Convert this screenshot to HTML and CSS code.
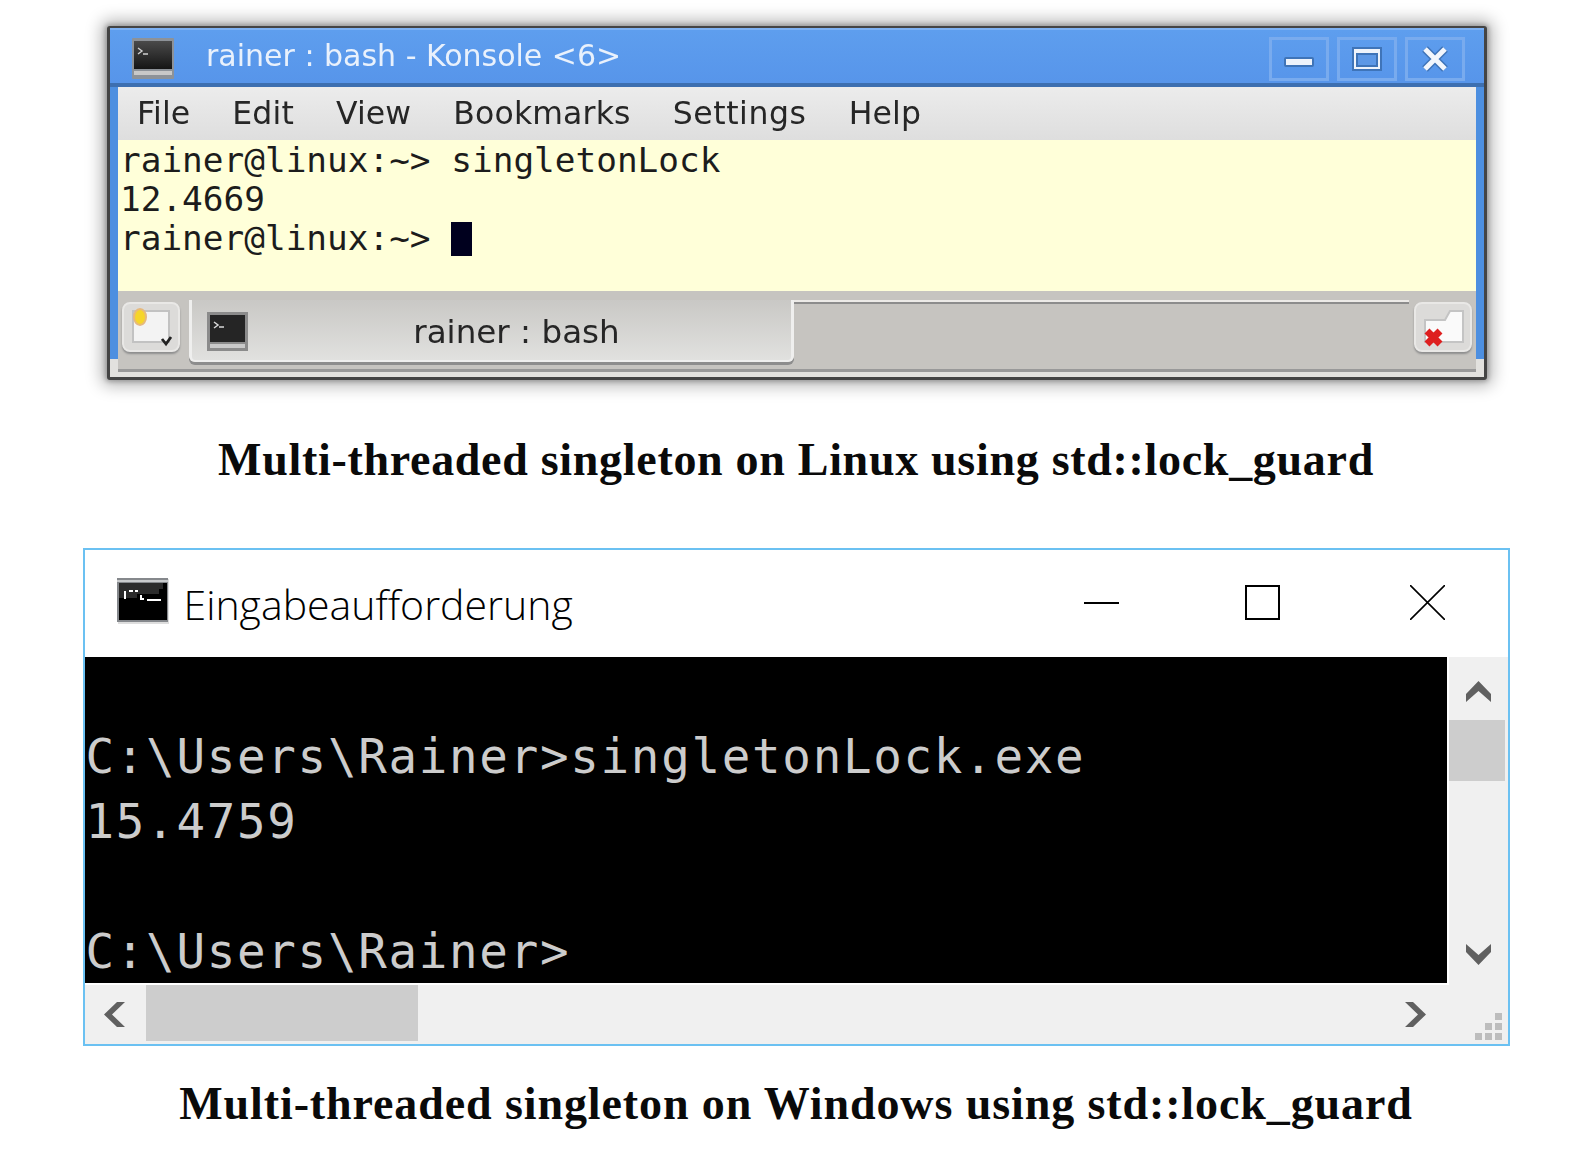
FILE: index.html
```html
<!DOCTYPE html>
<html lang="en">
<head>
<meta charset="utf-8">
<title>Multi-threaded singleton</title>
<link rel="stylesheet" href="styles.css">
</head>
<body>
<main class="page">
  <section class="konsole">
    <header class="k-title">
      <svg class="k-app-icon" viewBox="0 0 42 41"><defs><linearGradient id="ka" x1="0" y1="0" x2="0" y2="1"><stop offset="0" stop-color="#4a4a4a"/><stop offset="1" stop-color="#151515"/></linearGradient></defs><rect width="42" height="41" rx="1" fill="#8d9298"/><rect x="2" y="3" width="38" height="28" fill="url(#ka)"/><rect x="2" y="33" width="38" height="4" fill="#c8c8c8"/><path d="M6 10l4 3-4 3M11 16h5" fill="none" stroke="#d0d0d0" stroke-width="1.4"/></svg>
      <span class="k-title-text">rainer : bash - Konsole &lt;6&gt;</span>
      <div class="k-buttons">
        <button class="k-btn k-btn-min" aria-label="Minimize"><svg width="34" height="12" viewBox="0 0 34 12"><rect x="3" y="2" width="28" height="8" rx="1" fill="#eef3fb" stroke="#3f74b8" stroke-width="2"/></svg></button>
        <button class="k-btn" aria-label="Maximize"><svg width="34" height="28" viewBox="0 0 34 28"><rect x="2" y="2" width="30" height="24" fill="#3f74b8"/><rect x="4" y="4" width="26" height="20" fill="#eef3fb"/><rect x="7" y="9" width="20" height="12" fill="#5d98e6" stroke="#3f74b8" stroke-width="2"/></svg></button>
        <button class="k-btn" aria-label="Close"><svg width="30" height="28" viewBox="0 0 30 28"><path d="M5 4l20 20M25 4L5 24" stroke="#3f74b8" stroke-width="8"/><path d="M5 4l20 20M25 4L5 24" stroke="#f2f6fc" stroke-width="5"/></svg></button>
      </div>
    </header>
    <div class="k-body">
      <nav class="k-menu">
        <span>File</span><span>Edit</span><span>View</span><span>Bookmarks</span><span class="k-menu-wide">Settings</span><span>Help</span>
      </nav>
      <pre class="k-term">rainer@linux:~&gt; singletonLock
12.4669
rainer@linux:~&gt; <span class="k-cursor"></span></pre>
      <div class="k-tabs">
        <button class="k-tool" aria-label="New tab"><svg width="44" height="42" viewBox="0 0 44 42"><rect x="4" y="5" width="36" height="31" fill="#f3f3f3" stroke="#c2c2c2" stroke-width="2"/><ellipse cx="11" cy="11" rx="6" ry="8" fill="#f6d52a" stroke="#e6b97c" stroke-width="2"/><path d="M33 33l4 5 5-7" fill="none" stroke="#222" stroke-width="2.8"/></svg></button>
        <div class="k-tab">
          <svg class="k-tab-icon" viewBox="0 0 41 39"><rect width="41" height="39" fill="#8b8b8b"/><rect x="3" y="3" width="35" height="27" fill="#252525"/><rect x="3" y="32" width="35" height="4" fill="#c9c9c9"/><path d="M7 10l4 3-4 3M12 15h5" fill="none" stroke="#d8d8d8" stroke-width="1.5"/></svg>
          <span class="k-tab-text">rainer : bash</span>
        </div>
        <div class="k-tab-rest"></div>
        <button class="k-tool k-tool-close" aria-label="Close tab"><svg width="50" height="42" viewBox="0 0 50 42"><path d="M7 14h20l5-9h13v31H7z" fill="#fafafa" stroke="#c4c4c4" stroke-width="2"/><path d="M9 25l13 13M22 25L9 38" stroke="#de1f1f" stroke-width="7"/></svg></button>
      </div>
    </div>
  </section>

  <h2 class="caption caption-linux">Multi-threaded singleton on Linux using std::lock_guard</h2>

  <section class="cmd">
    <header class="cmd-title">
      <svg class="cmd-icon" viewBox="0 0 52 46"><rect x="1" y="1" width="51" height="45" fill="#dedede"/><rect width="51" height="44" fill="#85888c"/><rect y="2" width="51" height="2" fill="#c8cacc"/><rect x="2" y="5" width="48" height="37" fill="#000"/><path d="M2 5h44v6h-4v5H20v4H2z" fill="#2b2b2b"/><path d="M8 13v8M12 13h4M18 13h3M24 17v4h3M30 22h14" stroke="#fff" stroke-width="2" fill="none"/></svg>
      <span class="cmd-title-text">Eingabeaufforderung</span>
      <svg class="cmd-min" width="35" height="2" viewBox="0 0 35 2"><rect width="35" height="2" fill="#000"/></svg>
      <svg class="cmd-max" width="35" height="35" viewBox="0 0 35 35"><rect x="1" y="1" width="33" height="33" fill="none" stroke="#000" stroke-width="2"/></svg>
      <svg class="cmd-close" width="35" height="35" viewBox="0 0 35 35"><path d="M0 0l35 35M35 0L0 35" stroke="#000" stroke-width="1.6"/></svg>
    </header>
    <div class="cmd-main">
      <pre class="cmd-term">

C:\Users\Rainer&gt;singletonLock.exe
15.4759

C:\Users\Rainer&gt;</pre>
      <div class="cmd-vscroll">
        <svg class="chev" width="25" height="21" viewBox="0 0 25 21"><path d="M0 13L12.500 0 25 13v8L12.500 10 0 21z" fill="#606060"/></svg>
        <div class="cmd-vthumb"></div>
        <svg class="chev chev-down" width="25" height="21" viewBox="0 0 25 21"><path d="M0 0l12.500 11L25 0v8L12.500 21 0 8z" fill="#606060"/></svg>
      </div>
    </div>
    <div class="cmd-hscroll">
      <svg class="chev-left" width="21" height="25" viewBox="0 0 21 25"><path d="M21 0L8 12.500 21 25h-8L0 12.500 13 0z" fill="#606060"/></svg>
      <div class="cmd-hthumb"></div>
      <svg class="chev-right" width="21" height="25" viewBox="0 0 21 25"><path d="M0 0l13 12.500L0 25h8L21 12.500 8 0z" fill="#606060"/></svg>
      <div class="cmd-grip"><i></i><i></i><i></i><i></i><i></i><i></i></div>
    </div>
  </section>

  <h2 class="caption caption-win">Multi-threaded singleton on Windows using std::lock_guard</h2>
</main>
</body>
</html>
```
FILE: styles.css
```css
* { box-sizing: border-box; }
html, body { margin: 0; padding: 0; background: #fff; }
body { width: 1595px; height: 1157px; overflow: hidden; }
.page { width: 1592px; display: flex; flex-direction: column; align-items: center; padding-top: 26px; }
button { padding: 0; border: 0; background: none; font: inherit; }
svg { display: block; flex: none; }
pre { margin: 0; }

/* Konsole window */
.konsole {
  width: 1380px; height: 354px; margin-left: 2px;
  border: 3px solid #444; border-top-width: 2px; border-radius: 3px;
  background: #5a9bec;
  box-shadow: 0 0 4px 2px rgba(0,0,0,.22), 0 0 16px 6px rgba(0,0,0,.28);
  display: flex; flex-direction: column;
}
.k-title {
  height: 59px; flex: none;
  display: flex; align-items: flex-start;
  padding: 8px 19px 0 22px;
  border-top: 2px solid #7db1f3;
  border-bottom: 4px solid #3d6fb0;
  background: linear-gradient(#5e9eee, #5795ea);
}
.k-app-icon { width: 42px; height: 41px; }
.k-title-text {
  margin-left: 32px;
  font: 30px/36px "DejaVu Sans", sans-serif;
  color: #e9f1fc;
  white-space: nowrap;
  filter: blur(.4px);
}
.k-buttons { margin-left: auto; display: flex; gap: 8px; margin-top: -1px; }
.k-btn {
  width: 60px; height: 44px;
  border: 3px solid #79abee;
  display: flex; align-items: center; justify-content: center;
}
.k-btn-min { padding-top: 5px; }
.k-body {
  flex: 1; min-height: 0;
  padding: 0 8px 5px;
  display: flex; flex-direction: column;
  background: linear-gradient(#4d8fe0 calc(100% - 18px), #e2e1de 0);
}
.k-menu {
  height: 53px; flex: none;
  display: flex; gap: 42px;
  padding: 6px 0 0 19px;
  background: linear-gradient(#ececec, #dedede);
  font: 31.500px/40px "DejaVu Sans", sans-serif;
  letter-spacing: .15px;
  color: #262626;
}
.k-menu span { filter: blur(.4px); }
.k-menu .k-menu-wide { letter-spacing: .6px; }
.k-term {
  height: 151px; flex: none;
  padding: 1px 0 0 2px;
  background: #ffffd9;
  font: 34.400px/39px "DejaVu Sans Mono", monospace;
  color: #1c1c1c;
}
.k-cursor { display: inline-block; width: 21px; height: 34px; background: #00001e; vertical-align: -6px; }
.k-tabs {
  flex: 1; min-height: 0;
  display: flex; align-items: flex-start;
  padding-left: 4px;
  background: #c6c4c0;
  border-bottom: 3px solid #999;
}
.k-tool {
  width: 58px; height: 50px; margin-top: 11px; flex: none;
  border: 2px solid #e9e8e6; border-radius: 8px;
  background: #dcdbd9;
  box-shadow: 0 2px 2px #8e8e8e;
  display: flex; align-items: center; justify-content: center;
}
.k-tab {
  width: 605px; height: 62px; margin: 9px 0 0 9px; flex: none;
  display: flex; align-items: flex-start;
  padding: 12px 6px 0 15px;
  background: linear-gradient(#c9c8c5, #e1e1df);
  border: solid #efefee; border-width: 0 3px 2px 3px;
  border-radius: 0 0 6px 6px;
  box-shadow: 0 3px 0 #8d8d8d;
}
.k-tab-icon { width: 41px; height: 39px; }
.k-tab-text {
  flex: 1; text-align: center;
  font: 32.600px/40px "DejaVu Sans", sans-serif;
  color: #262626;
  filter: blur(.4px);
}
.k-tab-rest {
  flex: 1; height: 4px; margin: 9px 5px 0 0;
  background: #eceae7;
  border-bottom: 2px solid #8c8c8c;
}
.k-tool-close { margin-right: 4px; }

/* Captions */
.caption {
  margin: 0;
  font: 700 46px/60px "Liberation Serif", serif;
  color: #0a0a0a;
  white-space: nowrap;
}
.caption-linux { margin-top: 50px; letter-spacing: .7px; }
.caption-win { margin-top: 28px; letter-spacing: .9px; }

/* Windows console */
.cmd {
  width: 1427px; height: 498px; margin-top: 58px;
  border: 2px solid #6bc1f2;
  background: #fff;
  display: flex; flex-direction: column;
}
.cmd-title { height: 107px; flex: none; position: relative; display: flex; align-items: flex-start; padding: 26px 0 0 32px; }
.cmd-icon { width: 52px; height: 46px; margin-top: 2px; }
.cmd-title-text {
  margin-left: 15px;
  font: 300 41px/56px "Open Sans", sans-serif;
  color: #000;
}
.cmd-min { position: absolute; left: 999px; top: 52px; }
.cmd-max { position: absolute; left: 1160px; top: 35px; }
.cmd-close { position: absolute; left: 1325px; top: 35px; }
.cmd-main { height: 328px; flex: none; display: flex; }
.cmd-term {
  width: 1362px; height: 328px; flex: none;
  overflow: hidden;
  padding: 2px 0 0 1px;
  background: #000;
  border-bottom: 2px solid #fff;
  font: 47.500px/65px "DejaVu Sans Mono", monospace;
  letter-spacing: 1.700px;
  color: #cccccc;
}
.cmd-vscroll {
  flex: 1; position: relative;
  margin-left: 2px;
  background: #f0f0f0;
}
.chev { position: absolute; left: 17px; top: 24px; }
.chev-down { top: 287px; }
.cmd-vthumb { position: absolute; left: 0; top: 63px; width: 56px; height: 61px; background: #cdcdcd; }
.cmd-hscroll { flex: 1; min-height: 0; position: relative; background: #f0f0f0; }
.chev-left { position: absolute; left: 19px; top: 17px; }
.chev-right { position: absolute; left: 1320px; top: 17px; }
.cmd-hthumb { position: absolute; left: 61px; top: 0; width: 272px; height: 56px; background: #cdcdcd; }
.cmd-grip {
  position: absolute; left: 1390px; top: 28px;
  display: grid; grid-template-columns: repeat(3, 7px); grid-auto-rows: 7px; gap: 3px;
}
.cmd-grip i { background: #bdbdbd; }
.cmd-grip i:nth-child(1) { grid-area: 1 / 3; }
.cmd-grip i:nth-child(2) { grid-area: 2 / 2; }
.cmd-grip i:nth-child(3) { grid-area: 2 / 3; }
.cmd-grip i:nth-child(4) { grid-area: 3 / 1; }
.cmd-grip i:nth-child(5) { grid-area: 3 / 2; }
.cmd-grip i:nth-child(6) { grid-area: 3 / 3; }
```
